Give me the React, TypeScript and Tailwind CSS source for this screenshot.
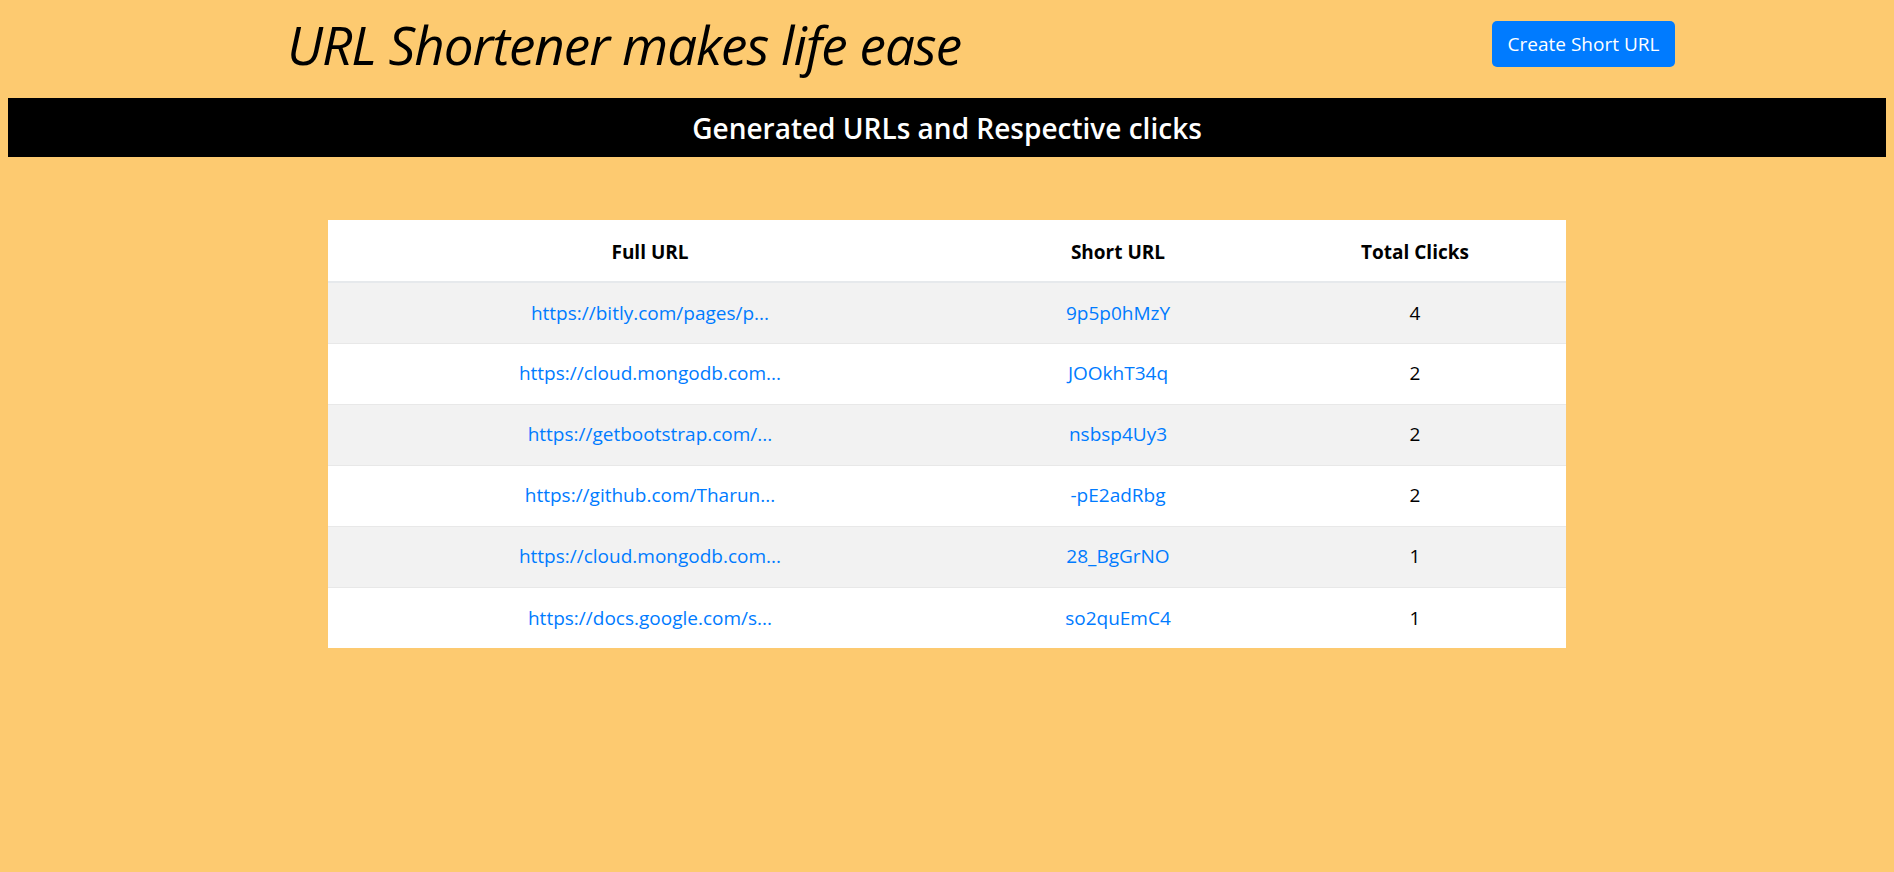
import React from "react";

type UrlRow = {
  full: string;
  short: string;
  clicks: number;
};

const rows: UrlRow[] = [
  { full: "https://bitly.com/pages/p...", short: "9p5p0hMzY", clicks: 4 },
  { full: "https://cloud.mongodb.com...", short: "JOOkhT34q", clicks: 2 },
  { full: "https://getbootstrap.com/...", short: "nsbsp4Uy3", clicks: 2 },
  { full: "https://github.com/Tharun...", short: "-pE2adRbg", clicks: 2 },
  { full: "https://cloud.mongodb.com...", short: "28_BgGrNO", clicks: 1 },
  { full: "https://docs.google.com/s...", short: "so2quEmC4", clicks: 1 },
];

const font = { fontFamily: '"Open Sans", "Noto Sans", sans-serif' };

export default function App() {
  return (
    <div
      className="min-h-screen w-full bg-[#fdca70] text-[#212529]"
      style={font}
    >
      {/* header */}
      <div className="flex h-[98px] items-center justify-between pl-[287px] pr-[219px] pb-[10px]">
        <h1 className="text-[53px] font-medium italic leading-none text-black tracking-[-1px]">
          URL Shortener makes life ease
        </h1>
        <button className="h-[46px] w-[183px] rounded-[5px] bg-[#007bff] text-[19px] text-white">
          Create Short URL
        </button>
      </div>

      <div className="mx-[8px] flex h-[59px] items-center justify-center bg-black">
        <h3 className="text-[28px] font-semibold text-white">
          Generated URLs and Respective clicks
        </h3>
      </div>

      <div className="mx-auto mt-[63px] w-[1238px] bg-white">
        <table className="w-full table-fixed border-collapse text-center text-[19px]">
          <thead>
            <tr className="h-[62px] border-b-2 border-[#e6e9ec]">
              <th className="w-[644px] pt-[3px] font-bold text-black">Full URL</th>
              <th className="w-[292px] pt-[3px] font-bold text-black">Short URL</th>
              <th className="pt-[3px] font-bold text-black">Total Clicks</th>
            </tr>
          </thead>
          <tbody>
            {rows.map((r, i) => (
              <tr
                key={i}
                className={
                  i % 2 === 0
                    ? "h-[61px] border-t border-[#e8e8e8] bg-[#f2f2f2]"
                    : "h-[61px] border-t border-[#e8e8e8] bg-white"
                }
              >
                <td>
                  <a href="#" className="text-[#007bff]">
                    {r.full}
                  </a>
                </td>
                <td>
                  <a href="#" className="text-[#007bff]">
                    {r.short}
                  </a>
                </td>
                <td className="text-black">{r.clicks}</td>
              </tr>
            ))}
          </tbody>
        </table>
      </div>
    </div>
  );
}
